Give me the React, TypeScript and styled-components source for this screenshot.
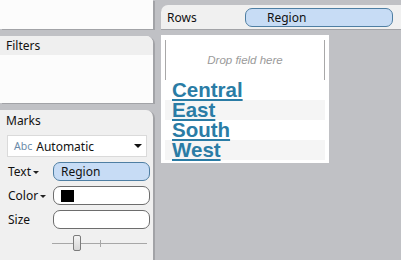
import { FC } from "react";
import styled, { createGlobalStyle } from "styled-components";

const regions = ["Central", "East", "South", "West"];

const GlobalStyle = createGlobalStyle`
  html, body {
    margin: 0;
    background: #c0c1c5;
    font-family: "Noto Sans", "Open Sans", sans-serif;
    font-size: 12px;
    color: #111;
  }
`;

const Caret: FC = () => <CaretMark />;

const App: FC = () => {
  return (
    <>
      <GlobalStyle />
      <Page>
        <Sidebar>
          <Panel $height={29} $square />
          <Panel $height={67}>
            <PanelTitle>Filters</PanelTitle>
          </Panel>
          <Panel $fill>
            <MarksTitle>Marks</MarksTitle>
            <MarkType>
              <AbcTag>Abc</AbcTag>
              <span>Automatic</span>
              <DropArrow />
            </MarkType>
            <CardRow>
              <CardLabel>
                Text
                <Caret />
              </CardLabel>
              <Pill $active>Region</Pill>
            </CardRow>
            <CardRow>
              <CardLabel>
                Color
                <Caret />
              </CardLabel>
              <Pill>
                <Swatch />
              </Pill>
            </CardRow>
            <CardRow>
              <CardLabel>Size</CardLabel>
              <Pill />
            </CardRow>
            <SliderTrack>
              <SliderTick />
              <SliderThumb />
            </SliderTrack>
          </Panel>
        </Sidebar>

        <Main>
          <Shelf>
            <ShelfLabel>Rows</ShelfLabel>
            <ShelfPill>Region</ShelfPill>
          </Shelf>
          <View>
            <ColumnHeader>Drop field here</ColumnHeader>
            {regions.map((name, i) => (
              <Row key={name} $striped={i % 2 === 1}>
                <RowText>{name}</RowText>
              </Row>
            ))}
          </View>
        </Main>
      </Page>
    </>
  );
};

export default App;

const Page = styled.div`
  display: grid;
  grid-template-columns: 153px 1fr;
  column-gap: 8px;
  height: 260px;
  overflow: hidden;
`;

const Sidebar = styled.div`
  display: flex;
  flex-direction: column;
  gap: 7px;
`;

const Panel = styled.section<{ $height?: number; $fill?: boolean; $square?: boolean }>`
  height: ${(p) => (p.$height ? `${p.$height}px` : "auto")};
  flex: ${(p) => (p.$fill ? 1 : "none")};
  background: ${(p) => (p.$fill ? "#f0f0f0" : "#fcfcfc")};
  border-top-right-radius: ${(p) => (p.$square ? 0 : "7px")};
  box-shadow: 2px 1px 0 #a2a3a7;
  display: flex;
  flex-direction: column;
`;

const PanelTitle = styled.div`
  height: 19px;
  line-height: 19px;
  padding-left: 6px;
  background: #efefef;
  border-top-right-radius: 7px;
`;

const MarksTitle = styled.div`
  height: 21px;
  line-height: 21px;
  padding-left: 6px;
`;

const MarkType = styled.div`
  margin: 4px 6px 0 7px;
  height: 22px;
  box-sizing: border-box;
  border: 1px solid #dadada;
  background: #fff;
  display: flex;
  align-items: center;
  gap: 4px;
  padding: 0 4px 0 6px;
`;

const AbcTag = styled.span`
  color: #6a8aa8;
  font-size: 10.5px;
`;

const DropArrow = styled.span`
  margin-left: auto;
  border-left: 4px solid transparent;
  border-right: 4px solid transparent;
  border-top: 4px solid #111;
`;

const CardRow = styled.div`
  display: grid;
  grid-template-columns: 44px 97px;
  align-items: center;
  padding-left: 9px;
  margin-top: 5px;

  &:first-of-type {
    margin-top: 6px;
  }
`;

const CardLabel = styled.div`
  display: flex;
  align-items: center;
  gap: 2px;
  margin-left: -1px;
`;

const CaretMark = styled.span`
  border-left: 3px solid transparent;
  border-right: 3px solid transparent;
  border-top: 3px solid #222;
  margin-top: 1px;
`;

const Pill = styled.div<{ $active?: boolean }>`
  height: 19px;
  box-sizing: border-box;
  border-radius: 7px;
  border: 1px solid ${(p) => (p.$active ? "#4f7fa3" : "#6d6d6d")};
  background: ${(p) => (p.$active ? "#c7dcf5" : "#fff")};
  display: flex;
  align-items: center;
  padding-left: 7px;
`;

const Swatch = styled.span`
  width: 13px;
  height: 12px;
  background: #000;
`;

const SliderTrack = styled.div`
  position: relative;
  margin: 14px 6px 0 52px;
  height: 1px;
  background: #a7a7a7;
`;

const SliderTick = styled.span`
  position: absolute;
  left: 48px;
  top: -3px;
  width: 1px;
  height: 7px;
  background: #a7a7a7;
`;

const SliderThumb = styled.span`
  position: absolute;
  left: 21px;
  top: -8px;
  width: 6px;
  height: 14px;
  border: 1px solid #7b7b7b;
  border-radius: 2px;
  background: linear-gradient(#f4f4f4, #d6d6d6);
`;

const Main = styled.div`
  display: flex;
  flex-direction: column;
  padding-top: 5px;
  gap: 6px;
`;

const Shelf = styled.div`
  height: 24px;
  background: #f0f0f0;
  border-top-left-radius: 7px;
  box-shadow: 0 1px 0 #a2a3a7;
  display: flex;
  align-items: center;
`;

const ShelfLabel = styled.div`
  width: 78px;
  padding-left: 6px;
`;

const ShelfPill = styled.div`
  width: 148px;
  height: 19px;
  box-sizing: border-box;
  border-radius: 7px;
  border: 1px solid #4f7fa3;
  background: #c7dcf5;
  display: flex;
  align-items: center;
  padding-left: 21px;
`;

const View = styled.div`
  width: 168px;
  height: 128px;
  box-sizing: border-box;
  background: #fff;
  padding: 5px 4px 0;
`;

const ColumnHeader = styled.div`
  height: 40px;
  box-sizing: border-box;
  border-left: 1px solid #a8a8a8;
  border-right: 1px solid #a8a8a8;
  display: flex;
  align-items: center;
  justify-content: center;
  font-family: "Liberation Sans", Arial, sans-serif;
  font-style: italic;
  font-size: 11.5px;
  color: #9a9a9a;
`;

const Row = styled.div<{ $striped: boolean }>`
  height: 20px;
  background: ${(p) => (p.$striped ? "#f5f5f5" : "#fff")};
  padding-left: 7px;
`;

const RowText = styled.span`
  font-family: "Liberation Sans", Arial, sans-serif;
  font-weight: bold;
  font-size: 20.5px;
  line-height: 20px;
  color: #2a7ca5;
  text-decoration: underline;
  text-decoration-thickness: 2px;
  text-underline-offset: 2px;
`;
